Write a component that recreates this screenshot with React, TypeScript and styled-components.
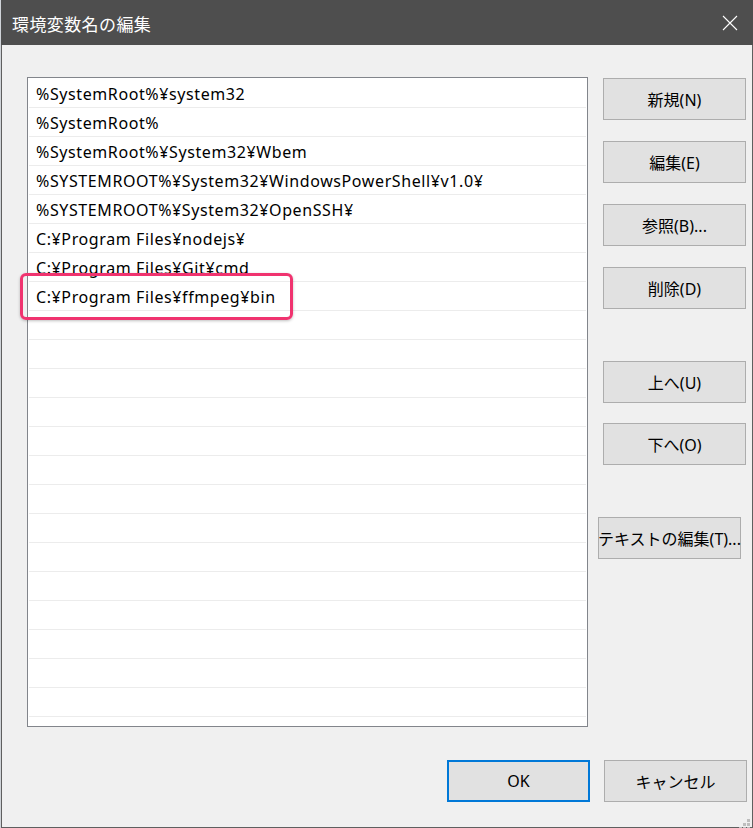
import React from "react";
import styled, { createGlobalStyle } from "styled-components";

const Global = createGlobalStyle`
  html, body { margin: 0; padding: 0; background: #d8d8d8; }
  body { width: 753px; height: 828px; overflow: hidden; }
`;

const FONT = `"Noto Sans", "Noto Sans CJK JP", sans-serif`;

const Screen = styled.div`
  display: flex;
  width: 753px;
  height: 828px;
  background: #cfd3d8;
`;

const Dialog = styled.div`
  box-sizing: border-box;
  margin-left: 1px;
  width: 752px;
  height: 828px;
  display: flex;
  flex-direction: column;
  background: #f0f0f0;
  border: 1px solid #5f5f5f;
  border-top: none;
  font-family: ${FONT};
  color: #000;
`;

const TitleBar = styled.div`
  height: 45px;
  flex: none;
  display: flex;
  align-items: center;
  justify-content: space-between;
  background: #4e4e4e;
  padding: 0 11px 0 11px;
  margin: 0 -1px;
`;

const Title = styled.div`
  color: #ffffff;
  font-size: 17px;
  letter-spacing: 0.4px;
  padding-top: 2px;
`;

const CloseBox = styled.div`
  width: 46px;
  height: 45px;
  display: flex;
  align-items: center;
  justify-content: center;
  margin-right: -11px;
`;

const Body = styled.div`
  display: flex;
  padding: 32px 6px 0 25px;
  gap: 15px;
`;

const ListFrame = styled.div`
  position: relative;
  width: 561px;
  height: 650px;
  flex: none;
`;

const ListBox = styled.div`
  box-sizing: border-box;
  width: 100%;
  height: 100%;
  background: #ffffff;
  border: 1px solid #82858b;
  padding: 1px;
  overflow: hidden;
`;

const Row = styled.div`
  box-sizing: content-box;
  height: 26px;
  padding-top: 2px;
  border-bottom: 1px solid #ececec;
  display: flex;
  align-items: center;
  padding-left: 7px;
  font-size: 16px;
  letter-spacing: 0.6px;
  white-space: nowrap;
  line-height: 20px;
`;

const Highlight = styled.div`
  position: absolute;
  left: -7px;
  top: 196px;
  width: 273px;
  height: 47px;
  box-sizing: border-box;
  border: 3px solid #f0336f;
  border-radius: 6px;
  box-shadow: 0 1px 3px rgba(0, 0, 0, 0.25);
  pointer-events: none;
`;

const ButtonColumn = styled.div`
  display: flex;
  flex-direction: column;
  padding-top: 1px;
`;

const Btn = styled.button<{ $gap?: number; $shift?: number; $primary?: boolean }>`
  box-sizing: border-box;
  width: 143px;
  height: 42px;
  margin-top: ${(p) => p.$gap ?? 0}px;
  margin-left: ${(p) => p.$shift ?? 0}px;
  background: #e1e1e1;
  border: ${(p) => (p.$primary ? "2px solid #0078d7" : "1px solid #adadad")};
  font-family: ${FONT};
  font-size: 16px;
  color: #000;
  padding: 0;
  white-space: nowrap;
  display: flex;
  align-items: center;
  justify-content: center;
  flex: none;
`;

const Footer = styled.div`
  display: flex;
  justify-content: flex-end;
  gap: 14px;
  padding: 33px 5px 0 0;
`;

const Grip = styled.div`
  position: absolute;
  right: 1px;
  bottom: 1px;
  width: 12px;
  height: 12px;
`;

const DialogInner = styled.div`
  position: relative;
  flex: 1;
  display: flex;
  flex-direction: column;
`;

const entries = [
  "%SystemRoot%¥system32",
  "%SystemRoot%",
  "%SystemRoot%¥System32¥Wbem",
  "%SYSTEMROOT%¥System32¥WindowsPowerShell¥v1.0¥",
  "%SYSTEMROOT%¥System32¥OpenSSH¥",
  "C:¥Program Files¥nodejs¥",
  "C:¥Program Files¥Git¥cmd",
  "C:¥Program Files¥ffmpeg¥bin",
];

const rows = Array.from({ length: 23 }, (_, i) => entries[i] ?? "");

export default function App() {
  return (
    <>
      <Global />
      <Screen>
        <Dialog>
          <TitleBar>
            <Title>環境変数名の編集</Title>
            <CloseBox>
              <svg width="16" height="16" viewBox="0 0 16 16">
                <path d="M1 1 L15 15 M15 1 L1 15" stroke="#ffffff" strokeWidth="1.1" fill="none" />
              </svg>
            </CloseBox>
          </TitleBar>
          <DialogInner>
            <Body>
              <ListFrame>
                <ListBox>
                  {rows.map((t, i) => (
                    <Row key={i}>{t}</Row>
                  ))}
                </ListBox>
                <Highlight />
              </ListFrame>
              <ButtonColumn>
                <Btn>新規(N)</Btn>
                <Btn $gap={21}>編集(E)</Btn>
                <Btn $gap={21}>参照(B)...</Btn>
                <Btn $gap={21}>削除(D)</Btn>
                <Btn $gap={52}>上へ(U)</Btn>
                <Btn $gap={20}>下へ(O)</Btn>
                <Btn $gap={52} $shift={-5}>テキストの編集(T)...</Btn>
              </ButtonColumn>
            </Body>
            <Footer>
              <Btn $primary>OK</Btn>
              <Btn>キャンセル</Btn>
            </Footer>
            <Grip>
              <svg width="12" height="12" viewBox="0 0 12 12">
                <rect x="8" y="0" width="3" height="3" fill="#bdbdbd" />
                <rect x="4" y="4" width="3" height="3" fill="#bdbdbd" />
                <rect x="8" y="4" width="3" height="3" fill="#bdbdbd" />
                <rect x="0" y="8" width="3" height="3" fill="#bdbdbd" />
                <rect x="4" y="8" width="3" height="3" fill="#bdbdbd" />
                <rect x="8" y="8" width="3" height="3" fill="#bdbdbd" />
              </svg>
            </Grip>
          </DialogInner>
        </Dialog>
      </Screen>
    </>
  );
}
